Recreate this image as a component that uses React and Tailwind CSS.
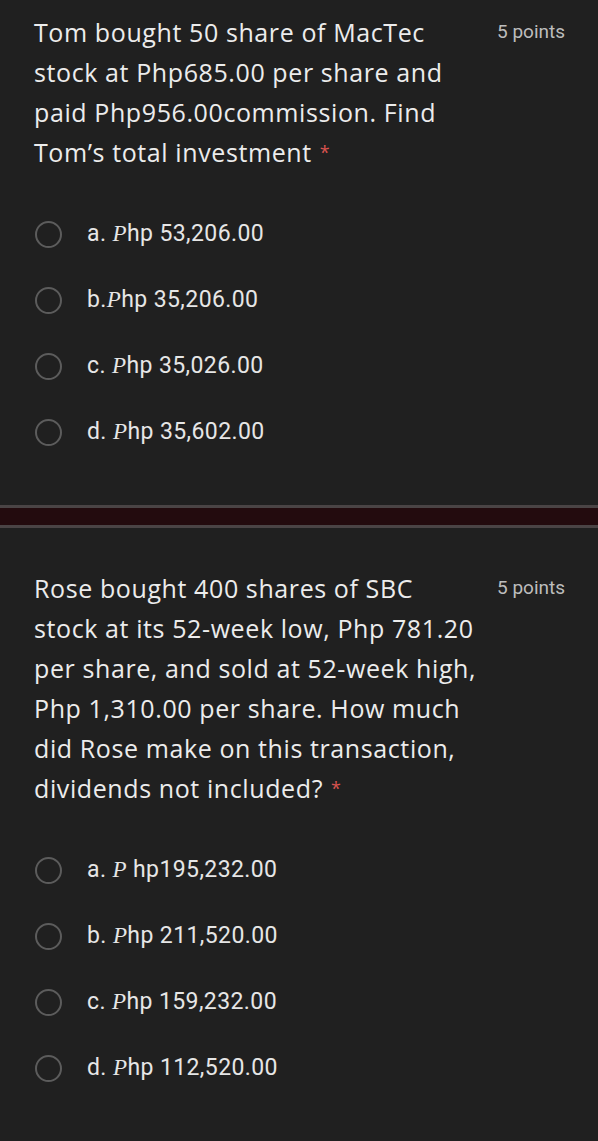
const questions = [
    {
        lines: [
            "Tom bought 50 share of MacTec",
            "stock at Php685.00 per share and",
            "paid Php956.00commission. Find",
            "Tom’s total investment",
        ],
        options: [
            ["a. ", "hp 53,206.00"],
            ["b.", "hp 35,206.00"],
            ["c. ", "hp 35,026.00"],
            ["d. ", "hp 35,602.00"],
        ],
    },
    {
        lines: [
            "Rose bought 400 shares of SBC",
            "stock at its 52-week low, Php 781.20",
            "per share, and sold at 52-week high,",
            "Php 1,310.00 per share. How much",
            "did Rose make on this transaction,",
            "dividends not included?",
        ],
        options: [
            ["a. ", " hp195,232.00"],
            ["b. ", "hp 211,520.00"],
            ["c. ", "hp 159,232.00"],
            ["d. ", "hp 112,520.00"],
        ],
    },
];

const Option = ({ label, rest }) => (
    <div className="flex items-center h-[66px]">
        <span className="w-[27px] h-[27px] rounded-full border-[2.5px] border-[#5c5c5c] ml-[35px] shrink-0" />
        <span
            className="ml-[25px] text-[23px] tracking-[0.4px] text-[#e6e6e6] whitespace-pre"
            style={{ fontFamily: "Roboto, sans-serif" }}
        >
            {label}
            <i style={{ fontFamily: "'Liberation Serif', serif" }}>P</i>
            {rest}
        </span>
    </div>
);

const Card = ({ q }) => (
    <div className="bg-[#202020]">
        <div className="flex items-start pl-[34px]">
            <div
                className="w-[463px] text-[25px] leading-[40px] tracking-[0.6px] text-[#ececec]"
                style={{ fontFamily: "'Open Sans', sans-serif" }}
            >
                {q.lines.map((line, i) => (
                    <div key={i} className="whitespace-nowrap">
                        {line}
                        {i === q.lines.length - 1 && (
                            <span className="text-[#d9534f] text-[18px] align-top ml-[8px]">*</span>
                        )}
                    </div>
                ))}
            </div>
            <div
                className="text-[19px] leading-[40px] text-[#bdbdbd]"
                style={{ fontFamily: "Roboto, sans-serif" }}
            >
                5 points
            </div>
        </div>
        <div className="mt-[29px]">
            {q.options.map((o, i) => (
                <Option key={i} label={o[0]} rest={o[1]} />
            ))}
        </div>
    </div>
);

export default function App() {
    return (
        <div className="w-[598px] h-[1141px] overflow-hidden bg-[#202020]">
            <div className="pt-[12px] pb-[40px] border-b-[3px] border-[#4a4445] bg-[#202020]">
                <Card q={questions[0]} />
            </div>
            <div className="h-[17px] bg-[#230b0e]" />
            <div className="pt-[40px] border-t-[3px] border-[#4a4445] bg-[#202020]">
                <Card q={questions[1]} />
            </div>
        </div>
    );
}
